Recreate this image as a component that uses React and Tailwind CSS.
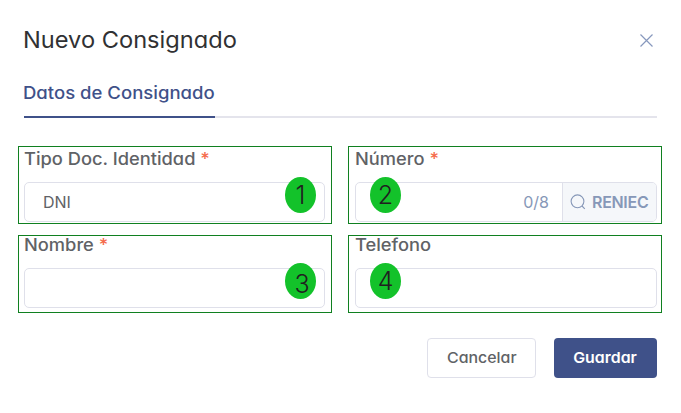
const FONT = "font-['Inter','Open_Sans',sans-serif] [font-feature-settings:'cv11']";

function Badge({ children, className }) {
  return (
    <span
      className={`absolute flex h-9 w-[31px] items-center justify-center rounded-[50%] bg-[#13c22a] text-[25px] leading-none font-light text-[#202020] ${className}`}
    >
      {children}
    </span>
  );
}

function Label({ children, required, className = "" }) {
  return (
    <label className={`-ml-[0.5px] block origin-left scale-x-[1.075] whitespace-nowrap text-[17px] leading-6 font-medium text-[#606266] ${className}`}>
      {children}
      {required && <span className="text-[#f56c4c]"> *</span>}
    </label>
  );
}

export default function App() {
  return (
    <div className={`h-[413px] w-[681px] overflow-hidden bg-white ${FONT}`}>
      <header className="flex h-20 items-center justify-between pr-[28px] pl-[23px]">
        <h1 className="origin-left scale-x-[1.05] text-[22.5px] leading-8 whitespace-nowrap text-[#303133]">Nuevo Consignado</h1>
        <button aria-label="Cerrar">
          <svg width="13" height="13" viewBox="0 0 13 13" fill="none" stroke="#8798bd" strokeWidth="1.2">
            <path d="M.5.5l12 12M12.5.5l-12 12" />
          </svg>
        </button>
      </header>

      <nav className="mx-6 flex h-[38px] border-b-2 border-[#e4e4ec]">
        <div className="h-[38px] w-[191px] border-b-2 border-[#3f5189] pt-px text-[17px] leading-6 font-medium whitespace-nowrap text-[#3f5189]">
          <span className="-ml-px inline-block origin-left scale-x-[1.09]">Datos de Consignado</span>
        </div>
      </nav>

      <main className="mt-7 ml-[18px] grid w-[644px] grid-cols-2 gap-x-4 gap-y-[11px]">
        <section className="relative h-[78px] border border-[#108020] pr-1.5 pl-[5px]">
          <Label required className="h-[35px] w-[200px]">Tipo Doc. Identidad</Label>
          <div className="flex h-10 items-center rounded-[5px] border border-[#dfe0ea] pl-[18px] text-[16px] text-[#606266]">
            DNI
          </div>
          <Badge className="top-[30px] right-[15px]">1</Badge>
        </section>

        <section className="relative h-[78px] border border-[#108020] pr-1 pl-1.5">
          <Label required className="h-[35px] w-[200px]">Número</Label>
          <div className="flex h-10 overflow-hidden rounded-[5px] border border-[#dfe0ea] text-[16px] text-[#8798b8]">
            <div className="flex flex-1 items-center justify-end pr-[13px]">0/8</div>
            <button className="flex w-[94px] items-center border-l border-[#dfe0ea] bg-[#f5f7fa] pl-[7px] font-semibold tracking-[-0.3px]">
              <svg width="16" height="16" viewBox="0 0 16 16" fill="none" stroke="#8798b8" strokeWidth="1.1" className="mr-1.5">
                <circle cx="7.5" cy="7.3" r="6.4" />
                <path d="M12 12l2.8 2.8" />
              </svg>
              RENIEC
            </button>
          </div>
          <Badge className="top-[30px] left-[21px]">2</Badge>
        </section>

        <section className="relative h-[78px] border border-[#108020] pr-1.5 pl-[5px]">
          <Label required className="-mt-[3px] h-[35px] w-[200px]">Nombre</Label>
          <div className="h-10 rounded-[5px] border border-[#dfe0ea]" />
          <Badge className="top-[27px] right-[15px] pt-1.5 pl-[3px]">3</Badge>
        </section>

        <section className="relative h-[78px] border border-[#108020] pr-1 pl-1.5">
          <Label className="-mt-[3px] h-[35px] w-[200px]">Telefono</Label>
          <div className="h-10 rounded-[5px] border border-[#dfe0ea]" />
          <Badge className="top-[27px] left-[21px]">4</Badge>
        </section>
      </main>

      <footer className="mt-[25px] flex justify-end gap-[18px] pr-6 text-[15px] font-medium">
        <button className="h-10 w-[109px] rounded-[4px] border border-[#dfe0ea] text-[#606266]">
          <span className="inline-block scale-x-[1.06]">Cancelar</span>
        </button>
        <button className="h-10 w-[103px] rounded-[4px] bg-[#3f5189] font-semibold text-white">
          <span className="inline-block scale-x-[1.06]">Guardar</span>
        </button>
      </footer>
    </div>
  );
}
